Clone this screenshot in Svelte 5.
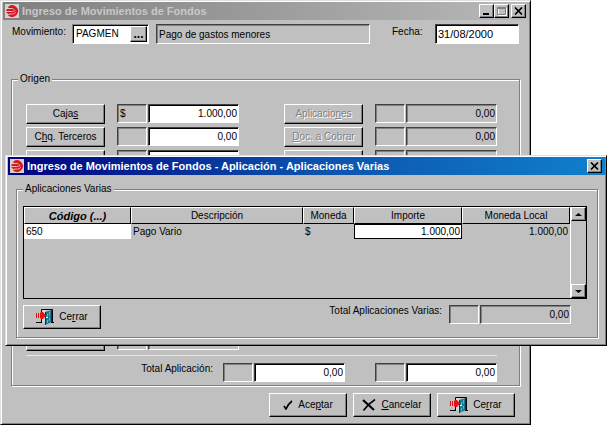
<script lang="ts">
  type Source = { label: string; currency: string; amount: string; readonly?: boolean };

  // "&" marks the access key of a caption
  const upperRows: [Source, Source][] = [
    [{ label: 'Caja&s', currency: '$', amount: '1.000,00' }, { label: 'Aplicacio&nes', currency: '', amount: '0,00' }],
    [{ label: 'C&hq. Terceros', currency: '', amount: '0,00' }, { label: '&Doc. a Cobrar', currency: '', amount: '0,00' }],
    [{ label: '', currency: '', amount: '' }, { label: '', currency: '', amount: '' }],
    [{ label: '', currency: '', amount: '' }, { label: '', currency: '', amount: '' }],
    [{ label: '', currency: '', amount: '' }, { label: '', currency: '', amount: '' }]
  ];

  const lowerRows: Source[] = [
    { label: '', currency: '', amount: '' },
    { label: '', currency: '', amount: '' },
    { label: '', currency: '', amount: '' },
    { label: '', currency: '', amount: '' },
    { label: 'Ch&eques', currency: '', amount: '', readonly: true }
  ];

  let movement = $state('PAGMEN');
  let date = $state('31/08/2000');
  let code = $state('650');
  let amount = $state('1.000,00');
  let dialogOpen = $state(true);
</script>

{#snippet caption(text: string)}
  {@const at = text.indexOf('&')}
  {#if at < 0}
    <span>{text}</span>
  {:else}
    <span>{text.slice(0, at)}<u>{text[at + 1]}</u>{text.slice(at + 2)}</span>
  {/if}
{/snippet}

{#snippet logo()}
  <svg class="logo" viewBox="0 0 14 14" aria-hidden="true">
    <rect width="14" height="14" fill="#d4d0d0" />
    <path d="M4 2Q7 0 10 2q4 3 3 6-1 4-5 5-4 0-5-2l3-1H3L1 8h5V7H1l1-2h5V4H3z" fill="#d81820" />
    <path d="M4 4.500h4l2 2M2 7.500h6l2-1M4 10h5l2-2" fill="none" stroke="#f0b8b8" stroke-width=".8" />
  </svg>
{/snippet}

{#snippet door()}
  <svg class="door" viewBox="0 0 18 16" aria-hidden="true">
    <path d="M5.500 3V.5h11V13M5.500 10v3.500M0 13.500h6M15 13.500h3" fill="none" stroke="#000" />
    <path d="M6 1h4v12H6z" fill="#d8d8d8" />
    <path d="M9 3l7-2v12l-7 3z" fill="#187890" />
    <path d="M9 3l1-.3v13L9 16zM16 1v12l-1 .5v-12z" fill="#083848" />
    <path d="M13 3l1-.3v4l-1 .3zM11 5l1-.3v3l-1 .3zM13 9l1-.3v3l-1 .3zM11 11l1-.3v3l-1 .3z" fill="#58b8c8" />
    <path d="M10 8h2v1h-2z" fill="#fff" />
    <path d="M0 4h1v5H0zM2 4h1v5H2zM4 4l1-1h2l3 3.500L7 10H5L4 9z" fill="#e81010" />
  </svg>
{/snippet}

{#snippet closeGlyph()}
  <svg width="9" height="8" viewBox="0 0 9 8" aria-hidden="true">
    <path d="M1 .5l7 7M8 .5l-7 7" stroke="#000" stroke-width="1.700" />
  </svg>
{/snippet}

{#snippet source(item: Source, disabled: boolean)}
  <div class="source">
    <button class="btn" {disabled} aria-label={item.label ? undefined : 'Detalle'}>{@render caption(item.label)}</button>
    <div class="money">
      <input class="field currency" readonly value={item.currency} aria-label="Moneda" />
      <input
        class="field value"
        class:editable={!disabled && !item.readonly}
        readonly={disabled || item.readonly}
        value={item.amount}
        aria-label="Importe"
      />
    </div>
  </div>
{/snippet}

<main class="desktop">
  <section class="window">
    <header class="titlebar inactive">
      {@render logo()}
      <h1>Ingreso de Movimientos de Fondos</h1>
      <button class="sys" aria-label="Minimizar">
        <svg width="9" height="8" viewBox="0 0 9 8" aria-hidden="true"><path d="M1 6h6v2H1z" /></svg>
      </button>
      <button class="sys" aria-label="Maximizar" disabled>
        <svg width="10" height="9" viewBox="0 0 10 9" aria-hidden="true">
          <path d="M1.500 1.500h8v7h-8z" fill="none" stroke="#fff" />
          <path d="M.5 .5h8v7h-8zM1 1.500h7" fill="none" stroke="#808080" />
        </svg>
      </button>
      <button class="sys close" aria-label="Cerrar ventana">{@render closeGlyph()}</button>
    </header>

    <div class="heading">
      <label for="movement">Movimiento:</label>
      <div class="lookup">
        <input id="movement" bind:value={movement} />
        <button class="dots" aria-label="Buscar movimiento">...</button>
      </div>
      <input class="field description" readonly value="Pago de gastos menores" aria-label="Descripción" />
      <label class="date-label" for="date">Fecha:</label>
      <input id="date" class="field editable date" bind:value={date} />
    </div>

    <fieldset class="origin">
      <legend>Origen</legend>
      <div class="rows">
        {#each upperRows as [left, right]}
          <div class="pair">
            {@render source(left, false)}
            {@render source(right, true)}
          </div>
        {/each}
      </div>
      <div class="rows lower">
        {#each lowerRows as item}
          <div class="pair">
            {@render source(item, false)}
            <div class="source"></div>
          </div>
        {/each}
      </div>
      <hr />
      <div class="totals">
        <label for="total-application">Total Aplicación:</label>
        <div class="money total">
          <input class="field currency" readonly aria-label="Moneda" />
          <input id="total-application" class="field editable value" value="0,00" />
        </div>
        <div class="money total">
          <input class="field currency" readonly aria-label="Moneda" />
          <input class="field editable value" value="0,00" aria-label="Total local" />
        </div>
      </div>
    </fieldset>

    <footer class="actions">
      <button class="btn big">
        <svg width="10" height="10" viewBox="0 0 10 10" aria-hidden="true">
          <path d="M1 6l2 3Q5 4 9 1" fill="none" stroke="#000" stroke-width="1.600" />
        </svg>
        {@render caption('Ace&ptar')}
      </button>
      <button class="btn big">
        <svg width="14" height="12" viewBox="0 0 14 12" aria-hidden="true">
          <path d="M1 1l11 10" stroke="#000" stroke-width="2.200" />
          <path d="M13 .5Q6 5 1.500 11.500" fill="none" stroke="#000" stroke-width="1.600" />
        </svg>
        {@render caption('&Cancelar')}
      </button>
      <button class="btn big">
        {@render door()}
        {@render caption('Ce&rrar')}
      </button>
    </footer>
  </section>

  {#if dialogOpen}
    <div class="window dialog" role="dialog" aria-labelledby="dialog-title">
      <header class="titlebar">
        {@render logo()}
        <h2 id="dialog-title">Ingreso de Movimientos de Fondos - Aplicación - Aplicaciones Varias</h2>
        <button class="sys" aria-label="Cerrar ventana" onclick={() => (dialogOpen = false)}>
          {@render closeGlyph()}
        </button>
      </header>

      <fieldset class="various">
        <legend>Aplicaciones Varias</legend>
        <div class="grid">
          <div class="sheet">
            <table>
              <thead>
                <tr>
                  <th class="code">Código (...)</th>
                  <th>Descripción</th>
                  <th class="coin">Moneda</th>
                  <th class="amount">Importe</th>
                  <th class="amount">Moneda Local</th>
                </tr>
              </thead>
              <tbody>
                <tr>
                  <td class="edit"><input bind:value={code} aria-label="Código" /></td>
                  <td>Pago Vario</td>
                  <td>$</td>
                  <td class="edit current"><input bind:value={amount} aria-label="Importe" /></td>
                  <td class="number">1.000,00</td>
                </tr>
              </tbody>
            </table>
          </div>
          <div class="scrollbar">
            <button aria-label="Subir"><svg width="7" height="3" viewBox="0 0 7 3"><path d="M0 3l3.500-3L7 3z" /></svg></button>
            <button aria-label="Bajar"><svg width="7" height="3" viewBox="0 0 7 3"><path d="M0 0l3.500 3L7 0z" /></svg></button>
          </div>
        </div>
        <div class="summary">
          <button class="btn big" onclick={() => (dialogOpen = false)}>
            {@render door()}
            {@render caption('Ce&rrar')}
          </button>
          <label for="total-various">Total Aplicaciones Varias:</label>
          <div class="money total">
            <input class="field currency" readonly aria-label="Moneda" />
            <input id="total-various" class="field value" readonly value="0,00" />
          </div>
        </div>
      </fieldset>
    </div>
  {/if}
</main>

<style>
  :global(body) {
    background: #fff;
  }

  .desktop {
    position: relative;
    font: 10px/12px 'Liberation Sans', Arial, sans-serif;
    color: #000;
  }

  .desktop * {
    box-sizing: border-box;
  }

  button,
  input {
    margin: 0;
    padding: 0;
    font: inherit;
    color: inherit;
    border-radius: 0;
  }

  input {
    min-width: 0;
    outline: none;
  }

  .window {
    margin-right: 76px;
    padding: 1px;
    background: #c0c0c0;
    border: 1px solid;
    border-color: #dfdfdf #000 #000 #dfdfdf;
    box-shadow: inset 1px 1px 0 #fff, inset -1px -1px 0 #808080;
  }

  .dialog {
    position: absolute;
    top: 155px;
    left: 5px;
    right: 0;
    margin: 0;
    padding: 1px 1px 7px;
  }

  /* title bars */
  .titlebar {
    display: flex;
    align-items: center;
    height: 18px;
    margin-left: 1px;
    padding: 0 3px 0 2px;
    background: linear-gradient(90deg, #000080, #0c50ac 50%, #1080cc);
    color: #fff;
  }

  .inactive {
    background: linear-gradient(90deg, #808080, #b8b8b8);
    color: #c8c8c8;
  }

  .logo {
    width: 14px;
    height: 14px;
    margin-right: 3px;
  }

  h1,
  h2 {
    flex: 1;
    margin: 0;
    font-size: 11px;
    line-height: 14px;
    font-weight: bold;
    white-space: nowrap;
    overflow: hidden;
  }

  .sys {
    display: flex;
    align-items: center;
    justify-content: center;
    width: 15px;
    height: 14px;
    background: #c0c0c0;
    border: 1px solid;
    border-color: #fff #000 #000 #fff;
    box-shadow: inset -1px -1px 0 #808080;
  }

  .close {
    margin-left: 2px;
  }

  /* shared controls */
  .field {
    height: 19px;
    padding: 0 2px;
    background: #c0c0c0;
    border: 1px solid;
    border-color: #404040 #fff #fff #404040;
    box-shadow: inset 1px 1px 0 #808080;
  }

  .editable {
    background: #fff;
    box-shadow: inset 1px 1px 0 #000;
  }

  .btn {
    display: flex;
    align-items: center;
    justify-content: center;
    width: 79px;
    height: 20px;
    background: #c0c0c0;
    border: 1px solid;
    border-color: #fff #000 #000 #fff;
    box-shadow: inset -1px -1px 0 #808080;
    white-space: nowrap;
  }

  .btn:disabled {
    color: #808080;
    text-shadow: 1px 1px 0 #fff;
  }

  .big {
    gap: 5px;
    width: 78px;
    height: 24px;
  }

  .door {
    width: 18px;
    height: 16px;
  }

  .money {
    display: flex;
    flex: 1;
    gap: 1px;
  }

  .currency {
    width: 30px;
  }

  .value {
    flex: 1;
    width: 0;
    padding: 0 1px;
    text-align: right;
  }

  .total {
    flex: 0 0 122px;
  }

  /* main form */
  .heading {
    display: flex;
    align-items: flex-start;
    padding: 4px 10px 0;
  }

  .heading label {
    width: 60px;
    padding-top: 2px;
  }

  .lookup {
    display: flex;
    width: 77px;
    height: 20px;
    margin-right: 7px;
    padding: 1px;
    background: #fff;
    border: 1px solid;
    border-color: #808080 #fff #fff #808080;
    box-shadow: inset 1px 1px 0 #000;
  }

  .lookup input {
    flex: 1;
    width: 0;
    padding-left: 2px;
    background: none;
    border: none;
  }

  .dots {
    width: 17px;
    background: #c0c0c0;
    border: 1px solid;
    border-color: #fff #000 #000 #fff;
    box-shadow: inset -1px -1px 0 #808080;
    font-size: 12px;
    font-weight: bold;
    line-height: 10px;
  }

  .description {
    flex: 1;
    height: 20px;
  }

  .heading .date-label {
    width: 43px;
    margin-left: 22px;
  }

  .date {
    width: 84px;
    height: 20px;
    font-size: 11px;
  }

  fieldset {
    min-width: 0;
    margin: 0;
    border: 1px solid #808080;
    box-shadow: 1px 1px 0 #fff, inset 1px 1px 0 #fff;
  }

  legend {
    padding: 0 2px;
    background: #c0c0c0;
  }

  .origin {
    margin: 29px 9px 0;
    padding: 19px 22px 3px 14px;
  }

  .origin legend {
    margin-left: -8px;
  }

  .rows {
    display: flex;
    flex-direction: column;
    gap: 3px;
  }

  .lower {
    margin-top: 23px;
  }

  .pair {
    display: flex;
    gap: 45px;
  }

  .source {
    display: flex;
    flex: 1;
    gap: 12px;
  }

  hr {
    height: 1px;
    margin: 4px 0 7px;
    background: #e8e8e8;
    border: none;
  }

  .totals {
    display: flex;
    justify-content: flex-end;
    gap: 30px;
  }

  .totals label {
    margin-right: -20px;
  }

  .actions {
    display: flex;
    justify-content: flex-end;
    gap: 6px;
    padding: 7px 14px 6px;
  }

  /* dialog */
  .various {
    margin: 8px 7px 0 9px;
    padding: 11px 10px 8px 6px;
  }

  .grid {
    display: flex;
    height: 93px;
    border: 1px solid #000;
  }

  .sheet {
    flex: 1;
    min-width: 0;
  }

  table {
    width: 100%;
    border-collapse: separate;
    border-spacing: 0;
    table-layout: fixed;
  }

  th {
    height: 17px;
    padding: 0;
    border: 1px solid;
    border-color: #fff #000 #000 #fff;
    font-weight: normal;
    white-space: nowrap;
  }

  .code {
    width: 107px;
    font-size: 11px;
    font-weight: bold;
    font-style: italic;
  }

  .coin {
    width: 51px;
  }

  .amount {
    width: 108px;
  }

  td {
    height: 15px;
    padding: 0 2px;
  }

  .edit {
    padding: 0;
    background: #fff;
  }

  .edit input {
    display: block;
    width: 100%;
    height: 15px;
    padding: 0 2px;
    background: none;
    border: none;
  }

  .current {
    border: 1px solid #000;
  }

  .current input {
    height: 13px;
    padding: 0 1px;
    text-align: right;
  }

  .number {
    text-align: right;
  }

  .scrollbar {
    display: flex;
    flex-direction: column;
    justify-content: space-between;
    width: 16px;
    border-left: 1px solid #fff;
  }

  .scrollbar button {
    display: flex;
    align-items: center;
    justify-content: center;
    height: 14px;
    background: #c0c0c0;
    border: 1px solid;
    border-color: #fff #000 #000 #fff;
    box-shadow: inset -1px -1px 0 #808080;
  }

  .summary {
    display: flex;
    align-items: flex-start;
    margin-top: 6px;
    padding-right: 16px;
  }

  .summary label {
    margin-left: auto;
    margin-right: 7px;
  }
</style>
